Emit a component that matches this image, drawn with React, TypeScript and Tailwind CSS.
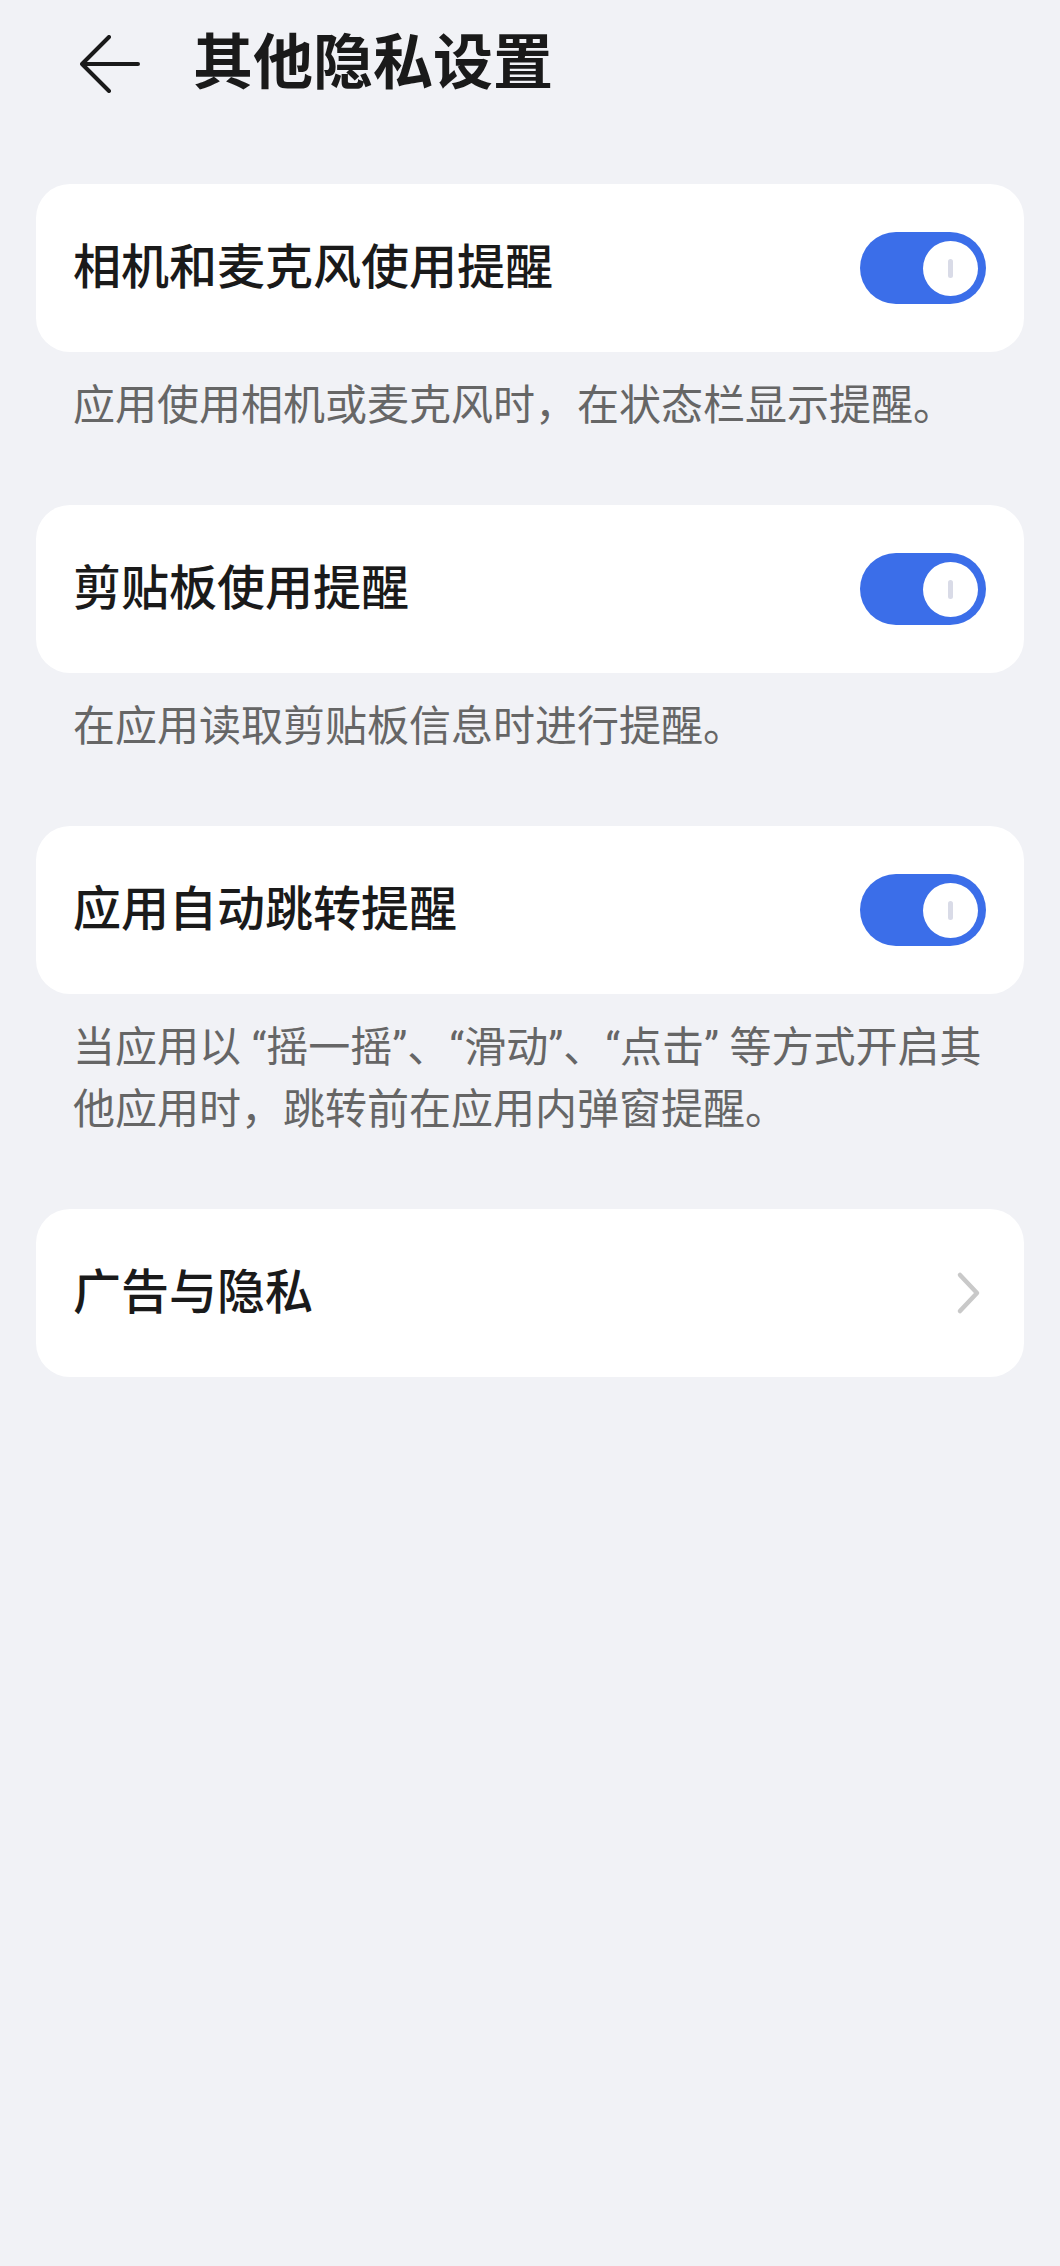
import React from "react";

const FONT = '"Roboto", "Noto Sans CJK SC", sans-serif';

function Toggle() {
  return (
    <div className="w-[126px] h-[72px] rounded-full bg-[#3b6ee9] flex items-center justify-end pr-[8px] shrink-0">
      <div className="w-[55px] h-[55px] rounded-full bg-white flex items-center justify-center">
        <div className="w-[5px] h-[19px] rounded-full bg-[#d9dbe7]" />
      </div>
    </div>
  );
}

function Chevron() {
  return (
    <svg width="26" height="44" viewBox="0 0 26 44" className="shrink-0">
      <path d="M4 4 L21 22 L4 40" fill="none" stroke="#c9c9c9" strokeWidth="4.5" strokeLinecap="round" strokeLinejoin="round" />
    </svg>
  );
}

function Card({ title, right }: { title: string; right: React.ReactNode }) {
  return (
    <div className="h-[168px] bg-white rounded-[34px] flex items-center justify-between pl-[37px] pr-[38px]">
      <span className="text-[48px] leading-none font-medium text-[#1a1a1a]">{title}</span>
      {right}
    </div>
  );
}

function Desc({ children }: { children: React.ReactNode }) {
  return (
    <p className="px-[37px] pt-[23px] pb-[68px] text-[42px] leading-[62px] text-[#666666]">{children}</p>
  );
}

export default function App() {
  return (
    <div className="min-h-[2266px] w-full bg-[#f1f2f6]" style={{ fontFamily: FONT }}>
      <div className="h-[127px] flex items-center pl-[80px]">
        <svg width="60" height="58" viewBox="0 0 60 58" className="shrink-0">
          <path d="M29 2 L2 29 L29 56 M2 29 L58 29" fill="none" stroke="#1a1a1a" strokeWidth="4" strokeLinecap="round" strokeLinejoin="round" />
        </svg>
        <h1 className="ml-[53px] text-[60px] leading-none font-bold text-[#1a1a1a]">其他隐私设置</h1>
      </div>
      <div className="mx-[36px] mt-[57px]">
        <Card title="相机和麦克风使用提醒" right={<Toggle />} />
        <Desc>应用使用相机或麦克风时，在状态栏显示提醒。</Desc>
        <Card title="剪贴板使用提醒" right={<Toggle />} />
        <Desc>在应用读取剪贴板信息时进行提醒。</Desc>
        <Card title="应用自动跳转提醒" right={<Toggle />} />
        <Desc>
          当应用以 “摇一摇”、“滑动”、“点击” 等方式开启其
          <br />
          他应用时，跳转前在应用内弹窗提醒。
        </Desc>
        <div className="h-[168px] bg-white rounded-[34px] flex items-center justify-between pl-[37px] pr-[42px]">
          <span className="text-[48px] leading-none font-medium text-[#1a1a1a]">广告与隐私</span>
          <Chevron />
        </div>
      </div>
    </div>
  );
}
